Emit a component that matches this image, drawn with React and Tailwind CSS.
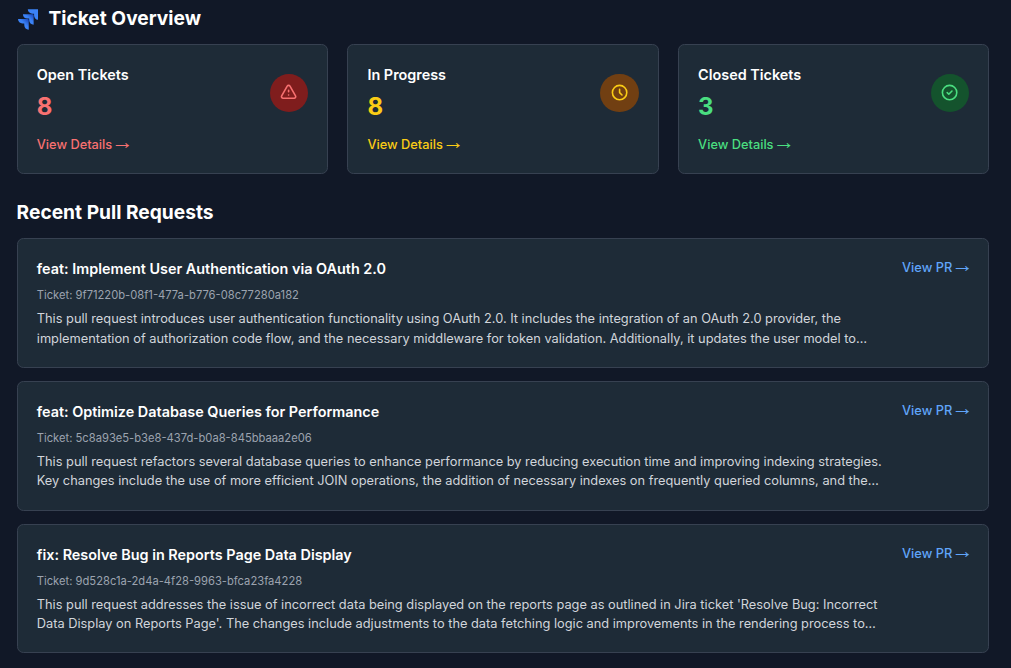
const tickets = [
  {
    title: 'Open Tickets',
    count: 8,
    color: 'text-[#f87171]',
    bg: 'bg-[#7f1d1d]',
    path: 'M12 9v2m0 4h.01m-6.938 4h13.856c1.54 0 2.502-1.667 1.732-3L13.732 4c-.77-1.333-2.694-1.333-3.464 0L3.34 16c-.77 1.333.192 3 1.732 3z',
  },
  {
    title: 'In Progress',
    count: 8,
    color: 'text-[#facc15]',
    bg: 'bg-[#713f12]',
    path: 'M12 8v4l3 3m6-3a9 9 0 11-18 0 9 9 0 0118 0z',
  },
  {
    title: 'Closed Tickets',
    count: 3,
    color: 'text-[#4ade80]',
    bg: 'bg-[#14532d]',
    path: 'M9 12l2 2 4-4m6 2a9 9 0 11-18 0 9 9 0 0118 0z',
  },
];

const pullRequests = [
  {
    title: 'feat: Implement User Authentication via OAuth 2.0',
    ticket: '9f71220b-08f1-477a-b776-08c77280a182',
    lines: [
      'This pull request introduces user authentication functionality using OAuth 2.0. It includes the integration of an OAuth 2.0 provider, the',
      'implementation of authorization code flow, and the necessary middleware for token validation. Additionally, it updates the user model to…',
    ],
  },
  {
    title: 'feat: Optimize Database Queries for Performance',
    ticket: '5c8a93e5-b3e8-437d-b0a8-845bbaaa2e06',
    lines: [
      'This pull request refactors several database queries to enhance performance by reducing execution time and improving indexing strategies.',
      'Key changes include the use of more efficient JOIN operations, the addition of necessary indexes on frequently queried columns, and the…',
    ],
  },
  {
    title: 'fix: Resolve Bug in Reports Page Data Display',
    ticket: '9d528c1a-2d4a-4f28-9963-bfca23fa4228',
    lines: [
      "This pull request addresses the issue of incorrect data being displayed on the reports page as outlined in Jira ticket 'Resolve Bug: Incorrect",
      "Data Display on Reports Page'. The changes include adjustments to the data fetching logic and improvements in the rendering process to…",
    ],
  },
];

function JiraLogo() {
  return (
    <svg viewBox="0 0 256 256" className="mt-[2px] ml-[1.2px] h-[21px] w-[20.6px] shrink-0">
      <defs>
        <linearGradient id="jiraMid" x1="98%" y1="0%" x2="58%" y2="41%">
          <stop offset="18%" stopColor="#1d4fc4" />
          <stop offset="100%" stopColor="#3b82f6" />
        </linearGradient>
      </defs>
      <path fill="#3b82f6" d="M244.658 0H121.707a55.502 55.502 0 0 0 55.502 55.502h22.649V77.37c.02 30.625 24.841 55.447 55.466 55.467V10.666C255.324 4.777 250.55 0 244.658 0" />
      <path fill="url(#jiraMid)" d="M183.822 61.262H60.872c.019 30.625 24.84 55.447 55.466 55.467h22.649v21.938c.039 30.625 24.877 55.43 55.502 55.43V71.93c0-5.891-4.776-10.667-10.667-10.667" />
      <path fill="url(#jiraMid)" d="M122.951 122.489H0c0 30.653 24.85 55.502 55.502 55.502h22.72v21.867c.02 30.597 24.798 55.408 55.396 55.467V133.156c0-5.891-4.776-10.667-10.667-10.667" />
    </svg>
  );
}

function Arrow() {
  return (
    <span className="mr-[-4.4px] ml-[-0.6px] align-[0px] font-['Liberation_Sans',sans-serif] text-[22px] leading-[0] font-normal whitespace-pre [word-spacing:-6.1px]">
      {' →'}
    </span>
  );
}

function TicketCard({ item }) {
  return (
    <div className="rounded-[6.4px] border border-[#374151] bg-[#1e2b37] p-[19.2px]">
      <div className="flex items-center justify-between">
        <div>
          <h3 className="text-[14.4px] leading-[22.4px] font-semibold text-white">{item.title}</h3>
          <p className={`mt-[6.4px] text-[24px] leading-[28.8px] font-bold ${item.color}`}>{item.count}</p>
        </div>
        <div className={`rounded-full p-[9.6px] ${item.bg} ${item.color}`}>
          <svg className="block h-[19.2px] w-[19.2px]" viewBox="0 0 24 24" fill="none" stroke="currentColor" strokeWidth="2" strokeLinecap="round" strokeLinejoin="round">
            <path d={item.path} />
          </svg>
        </div>
      </div>
      <a className={`mt-[12.8px] block h-[19.2px] text-[12.8px] leading-[19.2px] font-medium ${item.color}`}>View Details<Arrow /></a>
    </div>
  );
}

function PullRequestCard({ pr }) {
  return (
    <div className="flex items-start justify-between rounded-[6.4px] border border-[#374151] bg-[#1e2b37] p-[19.2px] last:pb-[18.8px]">
      <div className="min-w-0">
        <h3 className="text-[14.4px] leading-[22.4px] font-semibold text-white">{pr.title}</h3>
        <p className="mt-[6.4px] text-[11.2px] leading-[16px] text-[#9ca3af]">Ticket: {pr.ticket}</p>
        <p className="mt-[6.4px] text-[12.8px] leading-[19.2px] whitespace-nowrap text-[#d1d5db]">
          {pr.lines[0]}
          <br />
          {pr.lines[1]}
        </p>
      </div>
      <a className="h-[19.2px] shrink-0 text-[12.8px] leading-[19.2px] font-medium whitespace-nowrap text-[#60a5fa]">View PR<Arrow /></a>
    </div>
  );
}

export default function App() {
  return (
    <main className="h-[668px] overflow-hidden bg-[#111827] pt-[5.7px] pr-[21.6px] pl-[16.6px] font-['Inter',sans-serif]">
      <div className="mb-[12.8px] flex h-[25.6px] items-center gap-[10px]">
        <JiraLogo />
        <h2 className="text-[19.2px] leading-[25.6px] font-bold text-white">Ticket Overview</h2>
      </div>
      <section className="grid grid-cols-3 gap-[19.2px]">
        {tickets.map((item) => (
          <TicketCard key={item.title} item={item} />
        ))}
      </section>
      <h2 className="mt-[25.6px] mb-[12.8px] text-[19.2px] leading-[25.6px] font-bold text-white">Recent Pull Requests</h2>
      <section className="flex flex-col gap-[12.8px]">
        {pullRequests.map((pr) => (
          <PullRequestCard key={pr.ticket} pr={pr} />
        ))}
      </section>
    </main>
  );
}
